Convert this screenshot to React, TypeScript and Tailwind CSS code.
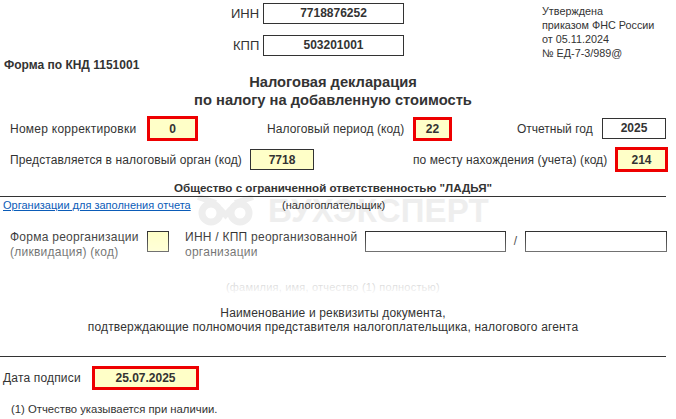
const field = 'flex items-center justify-center bg-[#ffffc8] font-bold tracking-normal text-[#333]';
const red = 'border-[3px] border-[#ee0000]';
const thin = 'border border-[#333]';

function Watermark() {
  return (
    <div className="absolute left-[196px] top-[194px] flex items-center gap-[13px] text-[#eeeeee]">
      <svg width="59" height="32" viewBox="0 0 59 32" fill="none" stroke="#eeeeee">
        <circle cx="15" cy="18" r="9" strokeWidth="7" />
        <circle cx="44" cy="18" r="9" strokeWidth="7" />
        <path d="M2 2 L20 8 M57 2 L39 8 M24 14 L29.500 20 L35 14" strokeWidth="6" />
      </svg>
      <span className="text-[33px] leading-none font-bold">БУХЭКСПЕРТ</span>
    </div>
  );
}

export default function App() {
  return (
    <div className="relative h-[419px] w-[676px] overflow-hidden bg-white font-['Liberation_Sans',Arial,sans-serif] text-[12px] tracking-[0.17px] text-[#333]">
      <Watermark />

      <div className="relative">
        {/* шапка */}
        <div className="flex h-[73px]">
          <div className="w-[231px] pt-[56px] pl-[4px] font-bold tracking-normal">Форма по КНД 1151001</div>
          <div className="flex w-[311px] flex-col gap-[11px] pt-[3px]">
            <div className="flex items-center">
              <span className="w-[32px] text-[13px] tracking-normal">ИНН</span>
              <div className={`h-[21px] w-[141px] bg-white text-center leading-[19px] font-bold tracking-normal ${thin}`}>7718876252</div>
            </div>
            <div className="flex items-center">
              <span className="w-[32px] pl-[2px] text-[13px] tracking-normal">КПП</span>
              <div className={`h-[21px] w-[141px] bg-white text-center leading-[19px] font-bold tracking-normal ${thin}`}>503201001</div>
            </div>
          </div>
          <div className="pt-[4px] text-[10.8px] leading-[14px] tracking-normal">
            Утверждена<br />приказом ФНС России<br />от 05.11.2024<br />№ ЕД-7-3/989@
          </div>
        </div>

        <h1 className="w-[666px] text-center text-[14.7px] leading-[18px] font-bold tracking-normal">
          Налоговая декларация<br />по налогу на добавленную стоимость
        </h1>

        {/* корректировка, период, год */}
        <div className="mt-[7px] flex h-[25px] items-center">
          <span className="w-[147px] pl-[10px] tracking-[0.25px]">Номер корректировки</span>
          <div className={`h-[25px] w-[51px] ${field} ${red}`}>0</div>
          <span className="ml-[69px] w-[146px] tracking-[0.1px]">Налоговый период (код)</span>
          <div className={`h-[24px] w-[39px] ${field} ${red}`}>22</div>
          <span className="ml-[65px] w-[85px] tracking-normal">Отчетный год</span>
          <div className={`h-[21px] w-[64px] bg-white text-center leading-[19px] font-bold tracking-normal ${thin}`}>2025</div>
        </div>

        {/* налоговый орган */}
        <div className="mt-[6px] flex h-[25px] items-center">
          <span className="w-[250px] pl-[10px] tracking-[0.12px]">Представляется в налоговый орган (код)</span>
          <div className={`h-[21px] w-[64px] ${field} ${thin}`}>7718</div>
          <span className="ml-[99px] w-[202px] tracking-[0.08px]">по месту нахождения (учета) (код)</span>
          <div className={`h-[25px] w-[53px] ${field} ${red}`}>214</div>
        </div>

        <div className="mt-[9px] w-[666px] border-b border-[#333] pb-px text-center text-[11.6px] leading-[14px] font-bold tracking-normal">
          Общество с ограниченной ответственностью "ЛАДЬЯ"
        </div>

        <div className="flex h-[16px] items-center text-[11px] tracking-normal">
          <a href="#" className="ml-[3px] w-[279px] text-[#0b5cb8] underline">Организации для заполнения отчета</a>
          <span>(налогоплательщик)</span>
        </div>

        {/* реорганизация */}
        <div className="mt-[18px] flex items-start tracking-[0.25px]">
          <div className="-mt-px w-[147px] pl-[10px] leading-[15px]">Форма реорганизации<br />(ликвидация) (код)</div>
          <div className={`h-[21px] w-[22px] ${field} ${thin}`} />
          <div className="-mt-px ml-[16px] w-[180px] leading-[15px]">ИНН / КПП реорганизованной<br />организации</div>
          <div className={`h-[21px] w-[141px] ${thin}`} />
          <span className="w-[19px] text-center leading-[21px]">/</span>
          <div className={`h-[21px] w-[142px] ${thin}`} />
        </div>

        <div className="mt-[20px] ml-[226px] text-[11px] leading-[14px] tracking-[0.2px]">(фамилия, имя, отчество (1) полностью)</div>
      </div>

      {/* затухание поверх блока реорганизации */}
      <div className="absolute top-[232px] left-0 h-[64px] w-full bg-gradient-to-b from-white/0 to-white" />

      <div className="relative mt-[12px] w-[666px] text-center leading-[14px] tracking-[0.16px]">
        Наименование и реквизиты документа,<br />подтверждающие полномочия представителя налогоплательщика, налогового агента
      </div>

      <div className="relative mt-[22px] flex h-[33px] w-[666px] items-center border-t border-[#333] pt-[9px]">
        <span className="w-[92px] pl-[3px]">Дата подписи</span>
        <div className={`h-[24px] w-[107px] ${field} ${red}`}>25.07.2025</div>
      </div>

      <div className="relative mt-[13px] pl-[11px] text-[11.3px] leading-[14px] tracking-normal">(1) Отчество указывается при наличии.</div>
    </div>
  );
}
